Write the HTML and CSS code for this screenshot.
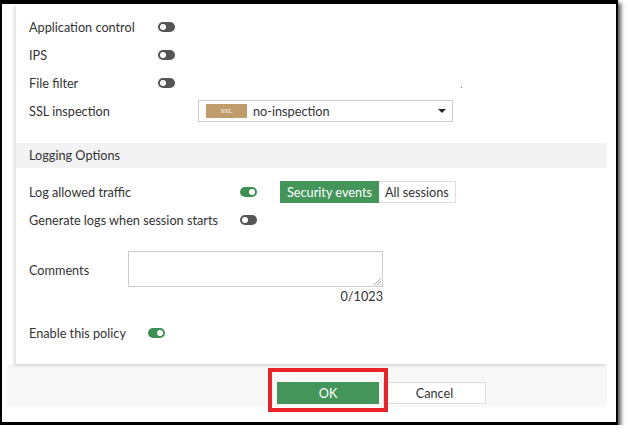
FILE: index.html
```html
<!DOCTYPE html>
<html>
<head>
<meta charset="utf-8">
<link rel="stylesheet" href="styles.css">
</head>
<body>
<div class="frame">
  <div class="panel">
    <div class="row"><span class="lbl w-a">Application control</span><span class="tg off"></span></div>
    <div class="row"><span class="lbl w-a">IPS</span><span class="tg off"></span></div>
    <div class="row"><span class="lbl w-a">File filter</span><span class="tg off"></span><span class="dot"></span></div>
    <div class="row"><span class="lbl w-ssl">SSL inspection</span>
      <div class="select"><span class="badge">SSL</span><span class="sel-text">no-inspection</span><span class="caret"></span></div>
    </div>
    <div class="section">Logging Options</div>
    <div class="row first-log"><span class="lbl w-log">Log allowed traffic</span><span class="tg on"></span>
      <div class="seg"><span class="seg-btn active">Security events</span><span class="seg-btn">All sessions</span></div>
    </div>
    <div class="row"><span class="lbl w-log">Generate logs when session starts</span><span class="tg off"></span></div>
    <div class="comments">
      <span class="lbl w-com">Comments</span>
      <div class="ta-wrap">
        <div class="textarea"><svg class="grip" width="8" height="8" viewBox="0 0 8 8"><path d="M8 1L1 8M8 4L4 8M8 7L7 8" stroke="#999" stroke-width="0.8"/></svg></div>
        <div class="counter">0/1023</div>
      </div>
    </div>
    <div class="row enable"><span class="lbl w-en">Enable this policy</span><span class="tg on"></span></div>
  </div>
  <div class="footer">
    <button class="btn ok">OK</button>
    <button class="btn cancel">Cancel</button>
    <div class="highlight"></div>
  </div>
</div>
</body>
</html>
```

FILE: styles.css
```css
html, body {
  margin: 0;
  padding: 0;
  background: #fff;
}
body {
  font-family: Lato, "Open Sans", sans-serif;
  font-size: 12.7px;
  color: #333;
}
.frame {
  width: 614px;
  height: 418px;
  border-style: solid;
  border-color: #000;
  border-width: 4px 2px 3px 2px;
  box-shadow: 3px 3px 4px rgba(0,0,0,0.65);
  background: #fff;
}
.panel {
  position: relative;
  z-index: 1;
  margin-left: 14px;
  width: 578px;
  height: 351px;
  padding: 9px 0 0 13px;
  background: #fff;
  box-shadow: -2px 2px 3px rgba(0,0,0,0.13);
}
.row {
  display: flex;
  align-items: center;
  height: 28px;
}
.lbl { flex: none; }
.w-a { width: 129px; }
.w-ssl { width: 169px; }
.w-log { width: 211px; }
.w-com { width: 99px; }
.w-en { width: 119px; }
.tg {
  position: relative;
  flex: none;
  width: 17px;
  height: 10px;
  border-radius: 5px;
  background: #555;
}
.tg::after {
  content: "";
  position: absolute;
  top: 2px;
  left: 2px;
  width: 6px;
  height: 6px;
  border-radius: 50%;
  background: #fff;
}
.tg.on { background: #3f8f55; }
.tg.on::after { left: 9px; }
.dot {
  align-self: flex-start;
  width: 1px;
  height: 1px;
  background: #666;
  margin-left: 286px;
  margin-top: 18px;
}
.select {
  display: flex;
  align-items: center;
  width: 253px;
  height: 20px;
  border: 1px solid #ccc;
}
.badge {
  width: 41px;
  height: 14px;
  margin-left: 7px;
  background: #c09b6c;
  color: #fff;
  font-family: "Liberation Serif", serif;
  font-size: 7px;
  line-height: 14px;
  text-align: center;
}
.sel-text { margin-left: 6px; flex: 1; }
.caret {
  width: 0;
  height: 0;
  border-left: 4px solid transparent;
  border-right: 4px solid transparent;
  border-top: 4px solid #222;
  margin-right: 6px;
}
.section {
  margin: 18px 0 0 -13px;
  height: 25px;
  line-height: 25px;
  padding-left: 13px;
  background: #f3f3f3;
}
.first-log { margin-top: 10px; }
.seg {
  display: flex;
  margin-left: 23px;
  height: 22px;
}
.seg-btn {
  display: flex;
  align-items: center;
  padding: 0 6px;
  border: 1px solid #ddd;
  background: #fff;
}
.seg-btn.active {
  background: #44955a;
  border-color: #44955a;
  color: #fff;
}
.seg-btn + .seg-btn { border-left: none; }
.comments {
  display: flex;
  align-items: flex-start;
  margin-top: 17px;
}
.comments .lbl { margin-top: 11px; }
.ta-wrap { width: 255px; }
.textarea {
  position: relative;
  height: 34px;
  border: 1px solid #ccc;
}
.grip { position: absolute; right: 1px; bottom: 1px; }
.counter {
  text-align: right;
  line-height: 16px;
  margin-top: 1px;
}
.enable { margin-top: 15px; }
.footer {
  position: relative;
  margin-left: 5px;
  width: 330px;
  height: 25px;
  padding: 18px 0 0 270px;
  background: #f8f8f8;
  display: flex;
  align-items: flex-start;
  gap: 4px;
}
.btn {
  height: 22px;
  font-family: Lato, "Open Sans", sans-serif;
  font-size: 12.7px;
  padding: 0;
  margin: 0;
}
.ok {
  width: 102px;
  background: #44955a;
  border: 1px solid #44955a;
  color: #fff;
}
.cancel {
  width: 103px;
  background: #fff;
  border: 1px solid #ddd;
  color: #333;
}
.highlight {
  position: absolute;
  left: 261px;
  top: 4px;
  width: 112px;
  height: 36px;
  border: 4px solid #e8232a;
}
```
